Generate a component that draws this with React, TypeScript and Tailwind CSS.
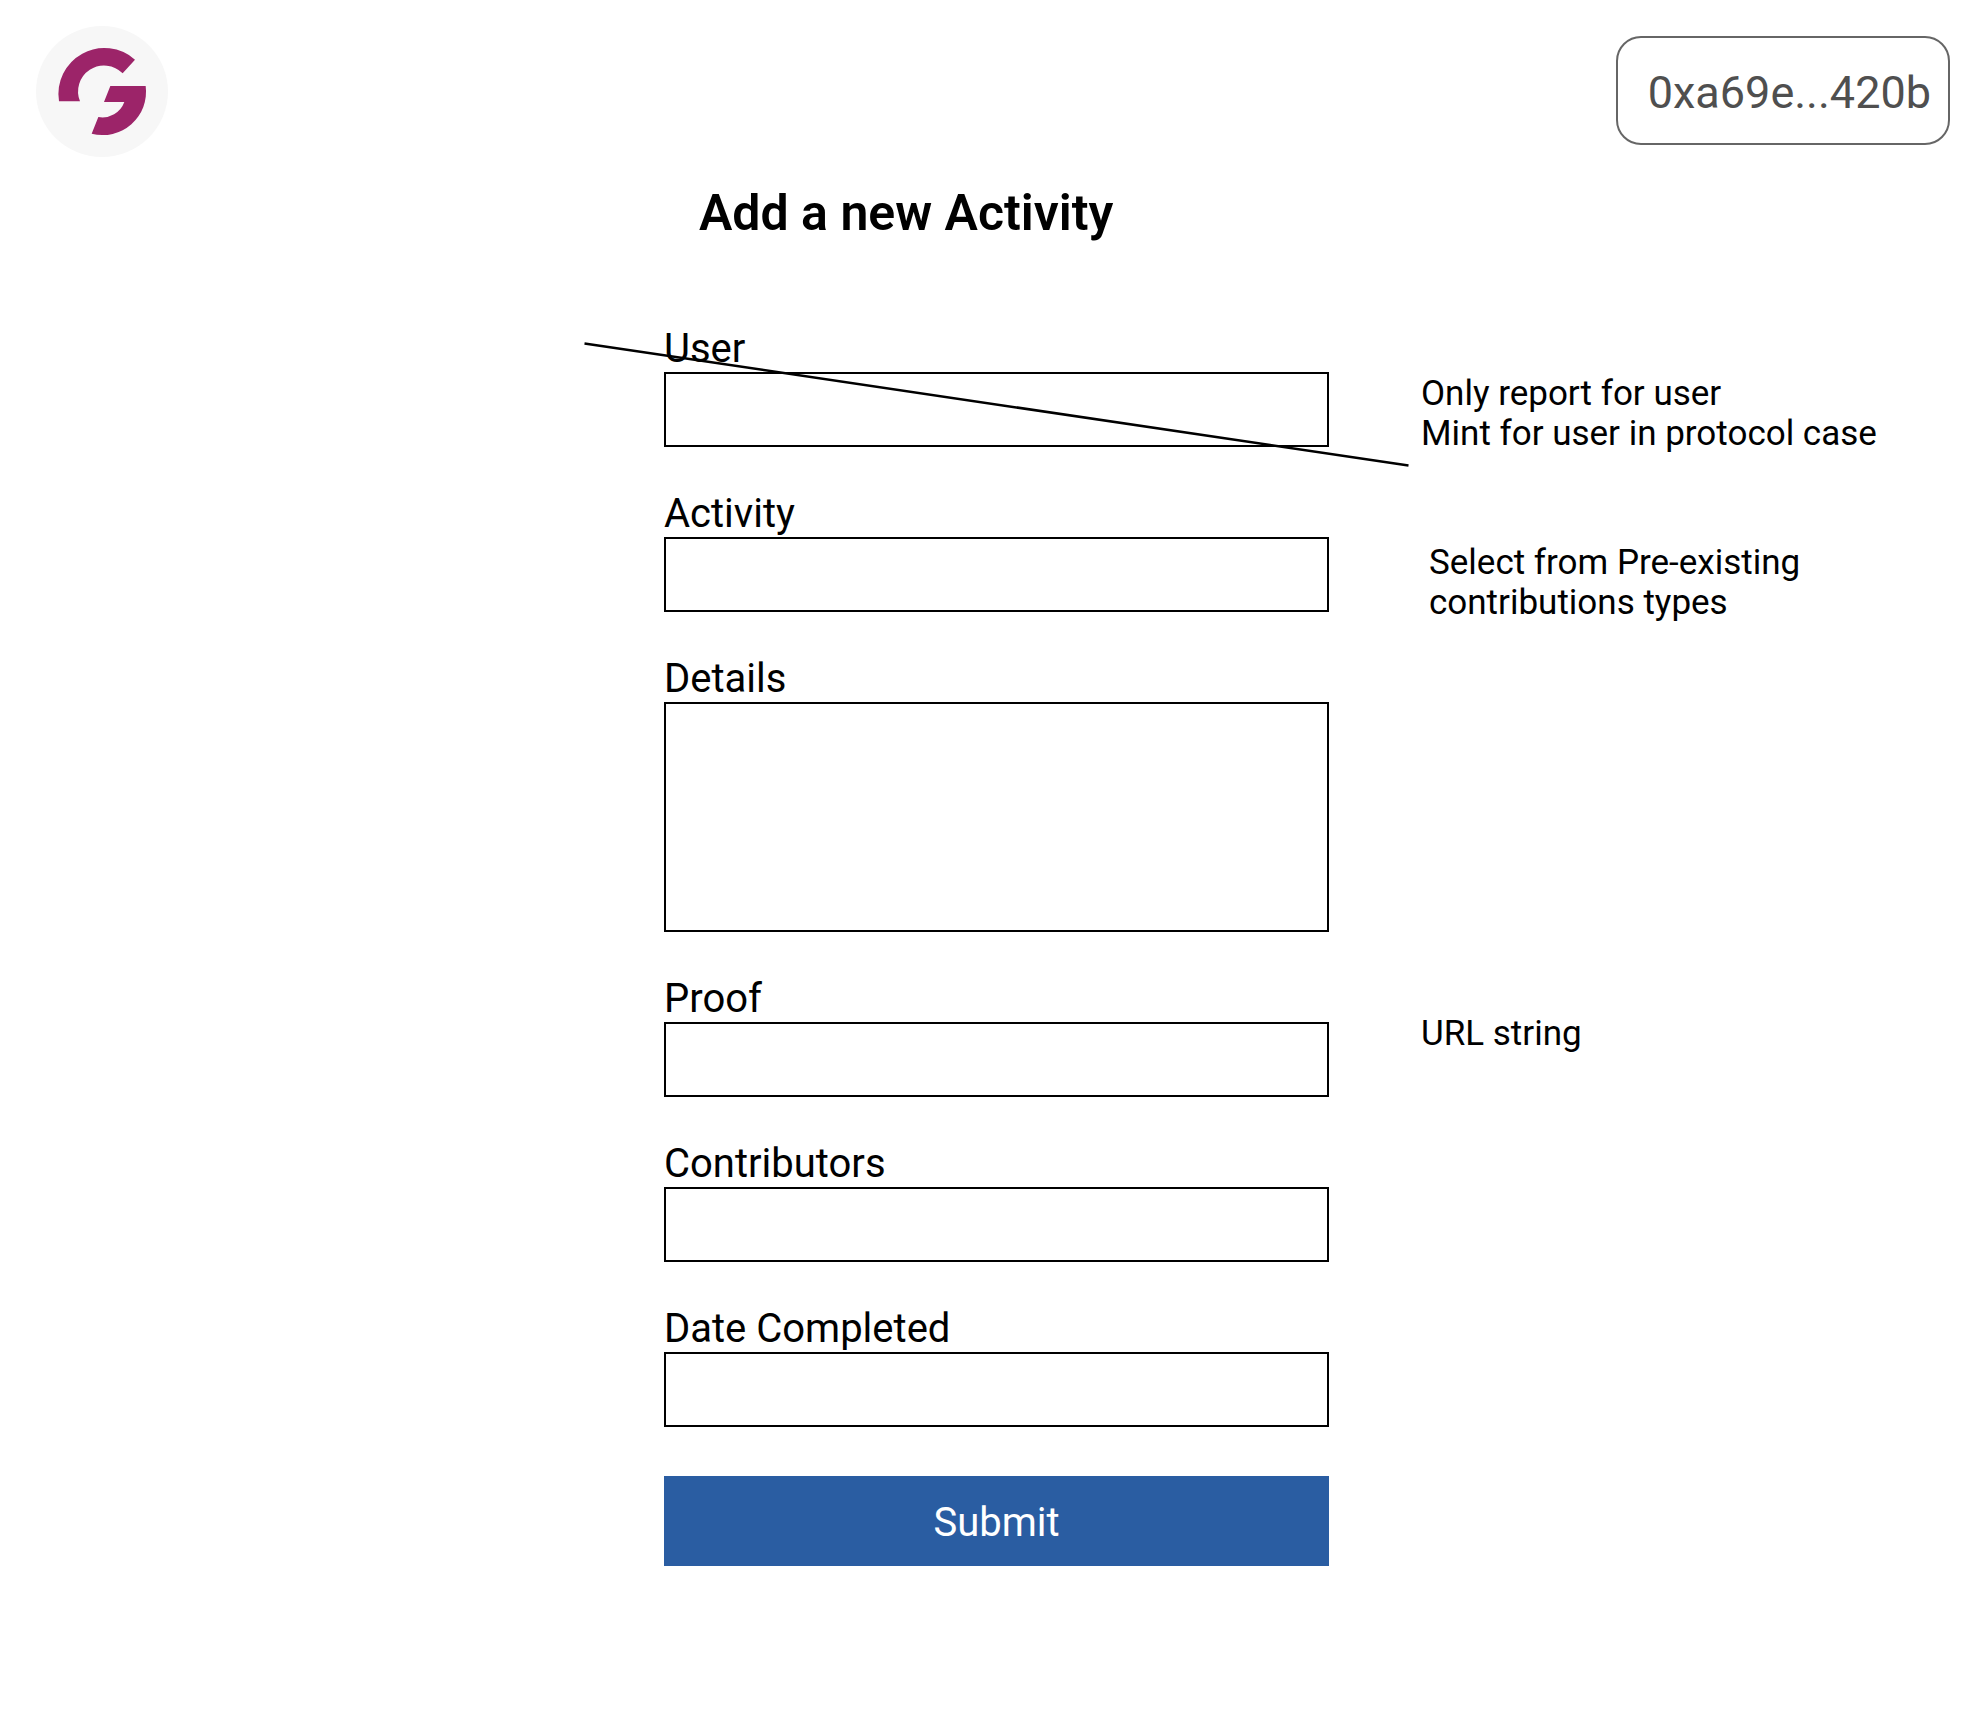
import type { ReactNode } from "react";

type Field = {
  id: string;
  label: string;
  multiline?: boolean;
  struck?: boolean;
  note?: string[];
  noteClass?: string;
};

const fields: Field[] = [
  {
    id: "user",
    label: "User",
    struck: true,
    note: ["Only report for user", "Mint for user in protocol case"],
    noteClass: "pt-12 pl-[92px]",
  },
  {
    id: "activity",
    label: "Activity",
    note: ["Select from Pre-existing", "contributions types"],
    noteClass: "pt-[52px] pl-[100px]",
  },
  { id: "details", label: "Details", multiline: true },
  { id: "proof", label: "Proof", note: ["URL string"], noteClass: "pt-[38px] pl-[92px]" },
  { id: "contributors", label: "Contributors" },
  { id: "date-completed", label: "Date Completed" },
];

function Logo() {
  return (
    <svg className="h-[131px] w-[132px]" viewBox="48 48 396 393" role="img" aria-label="Home">
      <ellipse cx="246" cy="244.5" rx="198" ry="196.5" fill="#f7f7f7" />
      <g fill="#9c2469">
        <path d="M117 274 A138 138 0 0 1 345 149 L308 190 A78 78 0 0 0 180 274 Z" />
        <path d="M271 228 H377 A130 130 0 0 1 215 371 L235 321 A70 70 0 0 0 313 276 H252 Z" />
      </g>
    </svg>
  );
}

function Strike() {
  return (
    <svg
      className="pointer-events-none absolute top-4 left-[-80px] h-[125px] w-[calc(100%+160px)]"
      viewBox="0 0 825 125"
      preserveAspectRatio="none"
      aria-hidden="true"
    >
      <path d="M0.5 1.5 L824.5 123.5" stroke="#000" strokeWidth="2.5" fill="none" />
    </svg>
  );
}

function Row({ children, className = "" }: { children: ReactNode; className?: string }) {
  return <div className={`grid grid-cols-[664fr_665fr_659fr] ${className}`}>{children}</div>;
}

function FieldRow({ field }: { field: Field }) {
  const noteId = field.note ? `${field.id}-note` : undefined;
  return (
    <Row>
      <div className="relative col-start-2 flex flex-col pb-11">
        <label htmlFor={field.id} className="text-[40px] leading-[46px]">
          {field.label}
        </label>
        {field.multiline ? (
          <textarea
            id={field.id}
            className="h-[230px] resize-none border-2 border-black px-4 py-3 text-[35px] leading-[40px]"
          />
        ) : (
          <input
            id={field.id}
            type="text"
            aria-describedby={noteId}
            className="h-[75px] border-2 border-black px-4 text-[35px]"
          />
        )}
        {field.struck && <Strike />}
      </div>
      {field.note && (
        <p id={noteId} className={`text-[35px] leading-[40px] ${field.noteClass}`}>
          {field.note.map((line) => (
            <span key={line} className="block whitespace-nowrap">
              {line}
            </span>
          ))}
        </p>
      )}
    </Row>
  );
}

export default function App() {
  return (
    <div className="min-h-screen bg-white font-[Roboto,sans-serif] text-black">
      <header className="flex items-start justify-between pt-[26px] pr-[38px] pl-9">
        <a href="#">
          <Logo />
        </a>
        <button
          type="button"
          className="mt-[10px] h-[109px] rounded-[25px] border-2 border-[#666] pt-1 pr-[17px] pl-[30px] text-[45px] text-[#4f4f4f]"
        >
          0xa69e...420b
        </button>
      </header>
      <main>
        <Row className="mt-[26px] mb-[83px]">
          <h1 className="col-start-2 pl-[35px] text-[50px] leading-[60px] font-semibold">
            Add a new Activity
          </h1>
        </Row>
        <form onSubmit={(event) => event.preventDefault()}>
          {fields.map((field) => (
            <FieldRow key={field.id} field={field} />
          ))}
          <Row className="mt-[5px]">
            <button
              type="submit"
              className="col-start-2 h-[90px] bg-[#2a5da2] pt-1 text-[40px] text-white"
            >
              Submit
            </button>
          </Row>
        </form>
      </main>
    </div>
  );
}
